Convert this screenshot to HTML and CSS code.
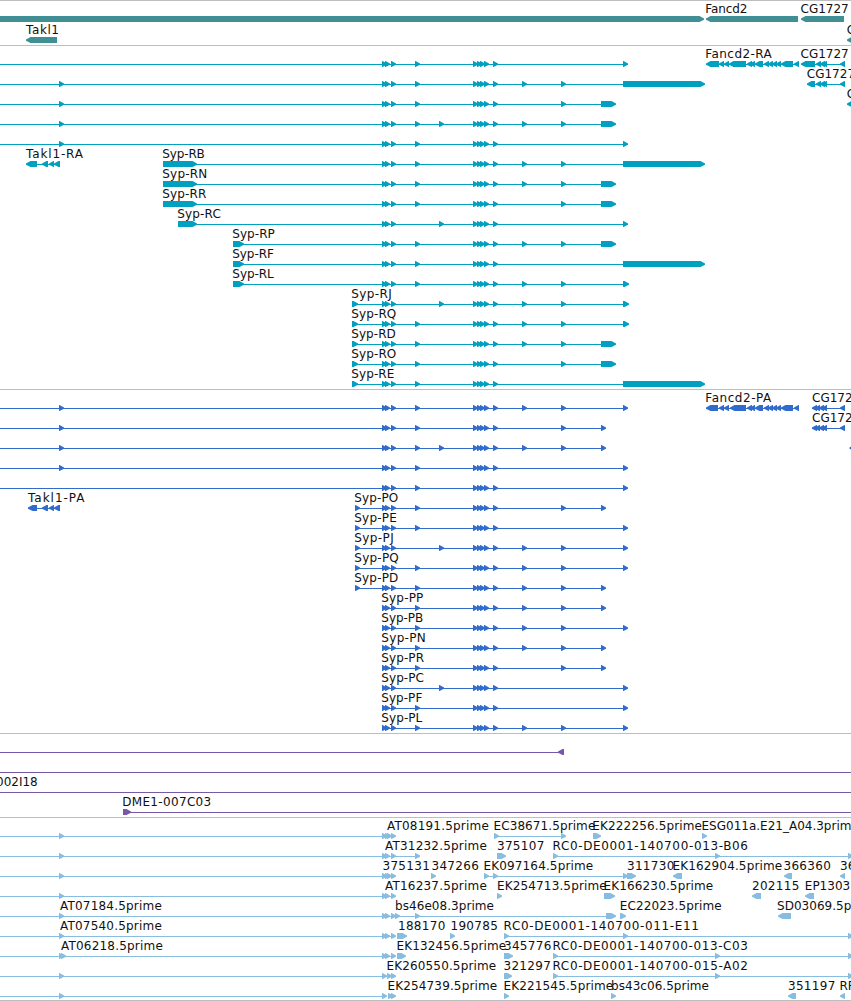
FILE: index.html
```
<!doctype html>
<html lang="en">
<head>
<meta charset="utf-8">
<title>Genome browser</title>
<link rel="stylesheet" href="styles.css">
</head>
<body>
<div class="browser">
	<div class="track gene"><svg id="gene"></svg></div>
	<div class="track mrna"><svg id="mrna"></svg></div>
	<div class="track cds"><svg id="cds"></svg></div>
	<div class="track bac"><svg id="bac"></svg></div>
	<div class="track est"><svg id="est"></svg></div>
</div>
<script src="script.js"></script>
</body>
</html>
```
FILE: styles.css
```
*{margin:0;padding:0;}
html,body{width:100%;height:100%;overflow:hidden;background:#fff;}
.browser{width:851px;height:1000px;border-bottom:1px solid #bebebe;}
.track{box-sizing:border-box;border-top:1px solid #bebebe;overflow:hidden;}
.track svg{display:block;width:100%;height:100%;}
.track text{font-family:'DejaVu Sans','Noto Sans',sans-serif;font-size:12px;fill:#111;}
.gene{height:45px;color:#3f8f95;}
.mrna{height:344px;color:#00a0c0;}
.cds{height:344px;color:#316ccd;}
.bac{height:84px;color:#7758a9;}
.est{height:183px;color:#87bde0;}
.part,.intron{fill:currentColor;}
```
FILE: script.js
```
var NS="http://www.w3.org/2000/svg";

//label widths in px, labels not listed keep their own width
var widths={
	'Fancd2':42,'Takl1':33,'Takl1-RA':57,'Takl1-PA':56.5,'Fancd2-RA':66.5,'Fancd2-PA':66,
	'Syp-RB':42.5,'Syp-RN':45,'Syp-RR':44,'Syp-RC':43.5,'Syp-RP':42.5,'Syp-RF':41.5,'Syp-RL':41.5,
	'Syp-RJ':40.5,'Syp-RQ':45,'Syp-RD':44.5,'Syp-RO':45,'Syp-RE':43,
	'Syp-PO':44,'Syp-PE':42.5,'Syp-PJ':39.5,'Syp-PQ':44.5,'Syp-PD':44,'Syp-PP':42,'Syp-PB':42,
	'Syp-PN':44.5,'Syp-PR':42.7,'Syp-PC':42.7,'Syp-PF':41,'Syp-PL':41,
	'DME1-007C03':89,'bs46e08.3prime':99,'bs43c06.5prime':98
};
function labelWidth(name){
	if(widths[name])return widths[name];
	if(/^\d{6}$/.test(name))return 47.3;
	if(/^RC0/.test(name))return 195.5;
	if(/^EK.*prime$/.test(name))return 109.7;
	if(/^(AT|EC|SD).*prime$/.test(name))return 101.8;
	return 0;
}
function add(parent,tag,attrs){
	var e=document.createElementNS(NS,tag);
	for(var k in attrs)e.setAttribute(k,attrs[k]);
	parent.appendChild(e);
	return e;
}
//one exon, its head is 5px long: dir 1 points right, -1 points left
function part(g,a,b,dir){
	var h=Math.min(5,b-a);
	var p=dir>0
		?[[a,15],[b-h+0.5,15],[b,17.4],[b,18.8],[b-h+0.5,21],[a,21]]
		:[[b,15],[a+h-0.5,15],[a,17.4],[a,18.8],[a+h-0.5,21],[b,21]];
	add(g,'polygon',{'class':'part',points:p.join(' ')});
}
//feature: [label, label x, dir, line start, line end, parts]
//a part is a start x (5px wide) or a [start,end] pair
function draw(id,pitch,rows){
	var svg=document.getElementById(id);
	rows.forEach(function(row,i){
		var g=add(svg,'g',{transform:'translate(0,'+i*pitch+')'});
		row.forEach(function(f){
			if(f[4]>f[3])add(g,'rect',{'class':'intron',x:f[3],y:18,width:f[4]-f[3],height:1});
			f[5].forEach(function(p){
				if(p.length)part(g,p[0],p[1],f[2]);
				else part(g,p,p+5,f[2]);
			});
		});
		row.forEach(function(f){
			if(!f[0])return;
			var t=add(g,'text',{x:f[1],y:12});
			var w=labelWidth(f[0]);
			if(w)t.setAttribute('textLength',w);
			t.textContent=f[0];
		});
	});
}

//exons shared by the Syp transcripts
var A=[382,385,391],C=[473,477,480,484,493];
function syp(name,x,first,mid,tail,last){
	var parts=(first?[first]:[]).concat(A,mid,C,tail,[last]);
	//concat flattens the [start,end] pair of the first exon only one level
	return [name,x-0.7,1,name?x:0,last.length?last[0]:last,parts];
}
var utr=[601,616],lng=[623,705];
var fancdR=[[706,719],719,724,[729,746],747,750,[755,763],764,768,772,776,[781,793],794];
var fancdP=[[706,718],719,724,[730,746],747,750,[755,763],764,768,772,776,[781,793],794];

draw('gene',21,[
	[['',0,1,0,0,[[-10,704]]],['Fancd2',705.3,-1,0,0,[[706,798]]],['CG1727',800.5,-1,0,0,[[801,844]]]],
	[['Takl1',26,-1,0,0,[[26,57]]],['C',846.8,-1,0,0,[[847,870]]]]
]);

draw('mrna',20,[
	[syp('',0,0,[415],[],623),['Fancd2-RA',705.3,-1,706,799,fancdR],['CG1727',800.5,-1,801,845,[[801,815],816,820,822,840]]],
	[syp('',0,59,[415],[522,561],lng),['CG1727',806.8,-1,807,845,[[807,815],816,820,822,840]]],
	[syp('',0,59,[415],[561],utr),['C',846.8,-1,0,0,[[847,870]]]],
	[syp('',0,59,[415,439],[522,561],utr)],
	[syp('',0,59,[415],[],623)],
	[['Takl1-RA',26,-1,26,60,[[26,37],[42,48],[49,54],[54,60]]],syp('Syp-RB',163,[163,197],[415],[522,561],lng)],
	[syp('Syp-RN',163,[163,197],[415],[522,561],utr)],
	[syp('Syp-RR',163,[163,197],[415],[561],utr)],
	[syp('Syp-RC',178,[178,197],[439],[],623)],
	[syp('Syp-RP',233,[233,244],[415],[522,561],utr)],
	[syp('Syp-RF',233,[233,244],[415],[],lng)],
	[syp('Syp-RL',233,[233,244],[415],[522,561],[623,629])],
	[syp('Syp-RJ',352,[352,358],[439],[522,561],[623,629])],
	[syp('Syp-RQ',352,[352,358],[415],[522,561],[623,629])],
	[syp('Syp-RD',352,[352,358],[415],[522,561],utr)],
	[syp('Syp-RO',352,[352,358],[415],[561],utr)],
	[syp('Syp-RE',352,[352,358],[415],[],lng)]
]);

draw('cds',20,[
	[syp('',0,59,[415],[522,561],623),['Fancd2-PA',705.3,-1,706,799,fancdP],['CG1727',812,-1,812,845,[812,815,819,822,840]]],
	[syp('',0,59,[415],[561],601),['CG1727',812,-1,812,845,[812,815,819,822,840]]],
	[syp('',0,59,[415,439],[522,561],601),['',0,-1,0,0,[[849.5,870]]]],
	[syp('',0,59,[415],[],623)],
	[syp('',0,0,[415],[],623)],
	[['Takl1-PA',28,-1,28,60,[[28,37],[42,48],[49,54],[54,60]]],syp('Syp-PO',355,355,[415],[561],601)],
	[syp('Syp-PE',355,355,[415],[],623)],
	[syp('Syp-PJ',355,355,[439],[522,561],623)],
	[syp('Syp-PQ',355,355,[415],[522,561],623)],
	[syp('Syp-PD',355,355,[415],[522,561],601)],
	[syp('Syp-PP',382,0,[415],[522,561],601)],
	[syp('Syp-PB',382,0,[415],[522,561],623)],
	[syp('Syp-PN',382,0,[415],[522,561],601)],
	[syp('Syp-PR',382,0,[415],[561],601)],
	[syp('Syp-PC',382,0,[439],[],623)],
	[syp('Syp-PF',382,0,[415],[],623)],
	[syp('Syp-PL',382,0,[415],[522,561],623)]
]);

draw('bac',20,[
	[['',0,-1,0,564,[[558,564]]]],
	[['',0,1,0,851,[]]],
	[['002I18',-4,1,0,851,[]]],
	[['DME1-007C03',122.2,1,123,851,[[123,131]]]]
]);

draw('est',20,[
	[['AT08191.5prime',387,1,0,391,[59,382,385,387,391]],['EC38671.5prime',493.5,1,494,566,[494,561]],
	 ['EK222256.5prime',592.3,1,0,0,[[593,601]]],['ESG011a.E21_A04.3prime',701.5,1,0,0,[702]]],
	[['AT31232.5prime',385,1,0,420,[59,382,385,391,415]],['375107',497,1,0,0,[[497,506]]],
	 ['RC0-DE0001-140700-013-B06',552.5,1,553,851,[553,715,848]]],
	[['375131',382.5,1,0,391,[59,382,385,387,391]],['347266',431.5,1,0,0,[431]],
	 ['EK097164.5prime',483.5,1,484,628,[484,493,623]],['311730',627,1,0,0,[[627,636]]],
	 ['EK162904.5prime',672.5,-1,0,0,[[673,682]]],['366360',783.5,-1,0,0,[[784,792]]],['366',840,-1,0,0,[840]]],
	[['AT16237.5prime',385,1,0,391,[59,382,385,391]],['EK254713.5prime',497,1,0,0,[497]],
	 ['EK166230.5prime',603.5,1,0,0,[[604,615]]],['202115',752,-1,0,0,[[752,761]]],['EP1303',804.8,-1,0,0,[[805,814]]]],
	[['AT07184.5prime',60,1,0,0,[59]],['bs46e08.3prime',395,1,0,616,[382,385,391,395,415,[606,616]]],
	 ['EC22023.5prime',619.8,1,0,0,[[620,626]]],['SD03069.5prime',777,-1,0,0,[[778,791]]]],
	[['AT07540.5prime',60,1,0,391,[59,382,385,391]],['188170',398,1,0,0,[[397,407]]],['190785',450.5,1,0,0,[450]],
	 ['RC0-DE0001-140700-011-E11',503.5,1,504,851,[504,623,848]]],
	[['AT06218.5prime',61,1,0,391,[59,61,382,385,391]],['EK132456.5prime',396.5,1,0,0,[[397,406]]],
	 ['345776',504,1,0,0,[[504,513]]],['RC0-DE0001-140700-013-C03',552.5,1,553,851,[553,715,848]]],
	[['EK260550.5prime',386.5,1,0,391,[59,382,387,391]],['321297',503.5,1,0,0,[[504,512]]],
	 ['RC0-DE0001-140700-015-A02',552.5,1,553,851,[553,715,848]]],
	[['EK254739.5prime',387.5,1,0,385,[59,382,388,391]],['EK221545.5prime',503.5,1,0,0,[504]],
	 ['bs43c06.5prime',611,1,0,0,[611]],['351197',788,-1,0,0,[[788,796]]],['RP',839.5,-1,0,0,[840]]]
]);
```
